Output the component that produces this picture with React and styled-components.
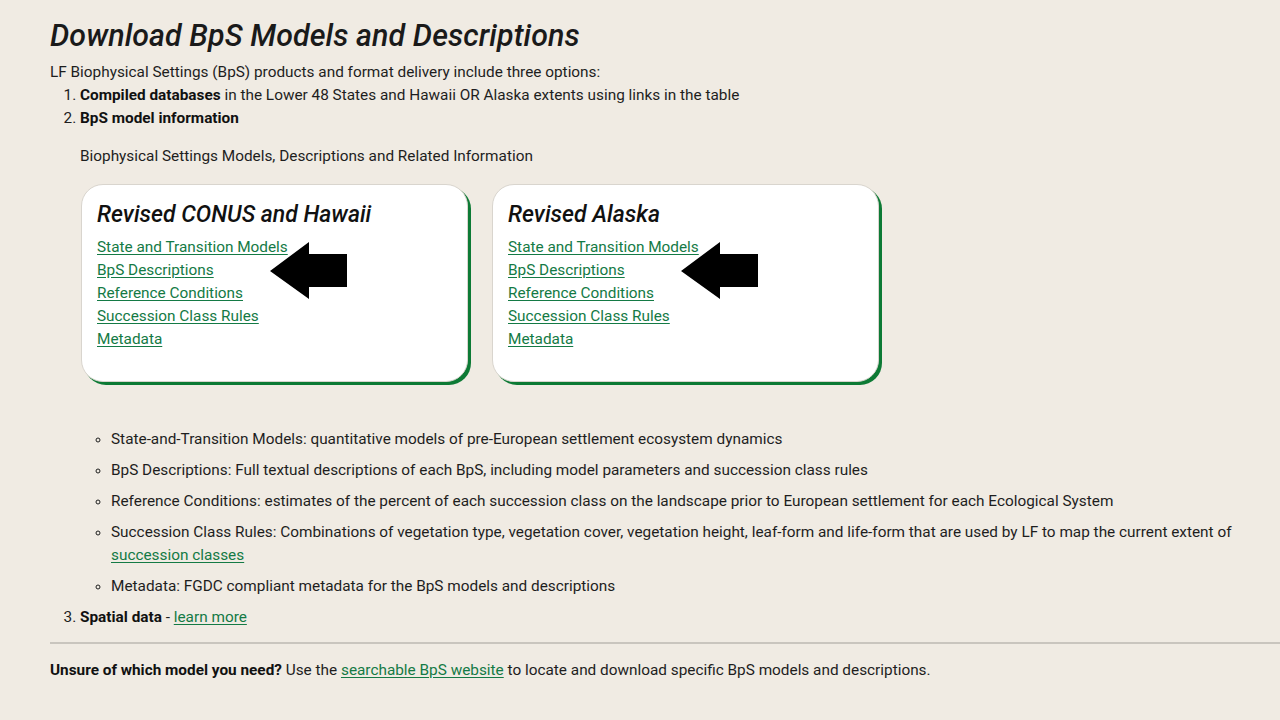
import styled, { createGlobalStyle } from 'styled-components'

const GlobalStyle = createGlobalStyle`
  html, body {
    margin: 0;
    padding: 0;
    background: #f0ebe3;
    overflow: hidden;
  }
  body {
    font-family: Roboto, "Liberation Sans", sans-serif;
    font-size: 15.35px;
    line-height: 23px;
    color: #1e1e1e;
  }
`

const regions = [
  { title: 'Revised CONUS and Hawaii' },
  { title: 'Revised Alaska' },
]

const cardLinks = [
  'State and Transition Models',
  'BpS Descriptions',
  'Reference Conditions',
  'Succession Class Rules',
  'Metadata',
]

function Arrow() {
  return (
    <ArrowSvg width="78" height="58" viewBox="0 0 78 58">
      <path d="M0 29 L39 0 L39 12 L77 12 L77 45 L39 45 L39 57 Z" fill="#000" />
    </ArrowSvg>
  )
}

export default function App() {
  return (
    <>
      <GlobalStyle />
      <Main>
        <Title>Download BpS Models and Descriptions</Title>
        <Intro>LF Biophysical Settings (BpS) products and format delivery include three options:</Intro>
        <Options>
          <li>
            <b>Compiled databases</b> in the Lower 48 States and Hawaii OR Alaska extents using links in the table
          </li>
          <li>
            <b>BpS model information</b>
            <SubIntro>Biophysical Settings Models, Descriptions and Related Information</SubIntro>
            <CardRow>
              {regions.map((r) => (
                <Card key={r.title}>
                  <CardTitle>{r.title}</CardTitle>
                  <CardLinks>
                    {cardLinks.map((l) => (
                      <GreenLink href="#" key={l}>{l}</GreenLink>
                    ))}
                  </CardLinks>
                  <Arrow />
                </Card>
              ))}
            </CardRow>
            <Terms>
              <li>State-and-Transition Models: quantitative models of pre-European settlement ecosystem dynamics</li>
              <li>BpS Descriptions: Full textual descriptions of each BpS, including model parameters and succession class rules</li>
              <li>Reference Conditions: estimates of the percent of each succession class on the landscape prior to European settlement for each Ecological System</li>
              <li>
                Succession Class Rules: Combinations of vegetation type, vegetation cover, vegetation height, leaf-form and life-form that are used by LF to map the current extent of{' '}
                <GreenLink href="#">succession classes</GreenLink>
              </li>
              <li>Metadata: FGDC compliant metadata for the BpS models and descriptions</li>
            </Terms>
          </li>
          <li>
            <b>Spatial data</b> - <GreenLink href="#">learn more</GreenLink>
          </li>
        </Options>
        <Rule />
        <Footnote>
          <b>Unsure of which model you need?</b> Use the <GreenLink href="#">searchable BpS website</GreenLink> to locate and download specific BpS models and descriptions.
        </Footnote>
      </Main>
    </>
  )
}

const Main = styled.main`
  width: 1240px;
  margin-left: 50px;
  padding-top: 18px;

  b {
    font-weight: 700;
    color: #111;
  }
`

const Title = styled.h1`
  margin: 0 0 7px;
  font-size: 30.4px;
  line-height: 36px;
  font-style: italic;
  font-weight: 500;
  color: #1a1a1a;
  letter-spacing: 0.1px;
`

const Intro = styled.p`
  margin: 0;
`

const Options = styled.ol`
  margin: 0;
  padding-left: 30px;
`

const SubIntro = styled.p`
  margin: 15px 0 0;
`

const CardRow = styled.div`
  display: flex;
  gap: 24px;
  margin: 16px 0 46px 1px;
`

const Card = styled.div`
  position: relative;
  box-sizing: border-box;
  width: 387px;
  height: 198px;
  padding: 15px 15px 0;
  background: #fff;
  border: 1px solid #d9d5ce;
  border-radius: 22px;
  box-shadow: 3px 3px 0 #0d7a35;
`

const CardTitle = styled.h2`
  margin: 0 0 6px;
  font-size: 23px;
  line-height: 30px;
  font-style: italic;
  font-weight: 500;
  color: #111;
`

const CardLinks = styled.div`
  display: flex;
  flex-direction: column;
  align-items: flex-start;
`

const GreenLink = styled.a`
  color: #147a45;
  text-decoration: underline;
  text-underline-offset: 2px;
`

const ArrowSvg = styled.svg`
  position: absolute;
  left: 188px;
  top: 57px;
`

const Terms = styled.ul`
  list-style: circle;
  margin: 0;
  padding-left: 31px;

  li {
    margin-bottom: 8px;
  }
  li::marker {
    font-size: 13px;
  }
`

const Rule = styled.hr`
  margin: 13px 0 0;
  border: 0;
  border-top: 2px solid #c9c5be;
`

const Footnote = styled.p`
  margin: 15px 0 0;
`
